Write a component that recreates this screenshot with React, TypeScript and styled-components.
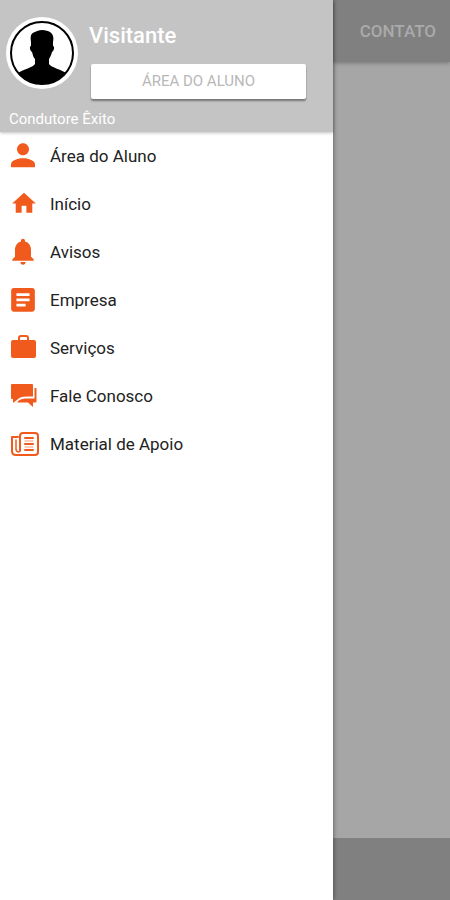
import React from "react";
import styled, { createGlobalStyle } from "styled-components";

const GlobalStyle = createGlobalStyle`
  *, *::before, *::after { box-sizing: border-box; }
  body { margin: 0; font-family: Roboto, "Liberation Sans", sans-serif; background: #a6a6a6; }
`;

const Screen = styled.div`
  display: flex;
  min-height: 100vh;
`;

const Drawer = styled.aside`
  flex: 0 0 74%;
  z-index: 1;
  background: #fff;
  box-shadow: 1px 0 4px rgba(0, 0, 0, 0.35);
`;

const Header = styled.header`
  display: flex;
  flex-direction: column;
  justify-content: space-between;
  height: 132px;
  padding: 15px 27px 3px 6px;
  background: #c4c4c4;
  box-shadow: 0 1px 3px rgba(0, 0, 0, 0.25);
  color: #fff;
`;

const Profile = styled.div`
  display: flex;
  gap: 11px;
`;

const Avatar = styled.svg`
  flex: none;
  width: 72px;
  height: 74px;
`;

const ProfileInfo = styled.div`
  flex: 1;
  display: flex;
  flex-direction: column;
  padding-top: 7px;
`;

const UserName = styled.h1`
  margin: 0;
  font-size: 22px;
  line-height: 28px;
  font-weight: 500;
`;

const AreaButton = styled.button`
  height: 35px;
  margin: 14px 0 0 2px;
  padding: 0;
  border: 0;
  border-radius: 2px;
  background: #fff;
  box-shadow: 0 2px 2px rgba(0, 0, 0, 0.4);
  color: #b8b8b8;
  font: 400 15px/35px Roboto, "Liberation Sans", sans-serif;
`;

const School = styled.p`
  margin: 0;
  padding-left: 3px;
  font-size: 15px;
  line-height: 20px;
`;

const Menu = styled.ul`
  margin: 0;
  padding: 0;
  list-style: none;
`;

const MenuLink = styled.a`
  display: flex;
  align-items: center;
  gap: 11px;
  height: 48px;
  padding-left: 11px;
  color: #222;
  font-size: 17px;
  line-height: 24px;
  text-decoration: none;
`;

const IconSlot = styled.span`
  display: flex;
  flex: none;
  width: 28px;
  color: #f15a1d;
`;

const Icon = styled.svg<{ $width: number; $height: number }>`
  width: ${(p) => p.$width}px;
  height: ${(p) => p.$height}px;
  fill: currentColor;
`;

const Page = styled.main`
  flex: 1;
  display: flex;
  flex-direction: column;
  min-width: 0;
  background: #a6a6a6;
`;

const TabBar = styled.nav`
  display: flex;
  align-items: center;
  justify-content: flex-end;
  height: 62px;
  padding-right: 14px;
  background: #808080;
  box-shadow: 0 1px 4px rgba(0, 0, 0, 0.3);
`;

const Tab = styled.a`
  color: #aaa;
  font-size: 17px;
  line-height: 24px;
  font-weight: 500;
  text-decoration: none;
`;

const BottomBar = styled.footer`
  height: 62px;
  margin-top: auto;
  background: #808080;
`;

type Item = { label: string; box: string; w: number; h: number; art: React.ReactNode };

const items: Item[] = [
  {
    label: "Área do Aluno", box: "4 4 16 17", w: 24, h: 26,
    art: <path d="M12 12c2.200 0 4-1.800 4-4s-1.800-4-4-4-4 1.800-4 4 1.800 4 4 4zm0 2c-2.700 0-8 1.300-8 4v2h16v-2c0-2.700-5.300-4-8-4z" />,
  },
  {
    label: "Início", box: "1 3 22 19", w: 26, h: 24,
    art: <path d="M10 20v-6h4v6h5v-8h3L12 3 2 12h3v8z" />,
  },
  {
    label: "Avisos", box: "3 2 18 21", w: 24, h: 28,
    art: <path d="M12 22c1.100 0 2-.9 2-2h-4c0 1.100.9 2 2 2zm6-6v-5c0-3.070-1.630-5.640-4.500-6.320V4c0-.83-.67-1.500-1.500-1.500s-1.500.67-1.500 1.500v.68C7.640 5.360 6 7.920 6 11v5l-2 2v1h16v-1l-2-2z" />,
  },
  {
    label: "Empresa", box: "3 3 18 19", w: 24, h: 25,
    art: <path d="M19 3H5c-1.100 0-2 .9-2 2v14c0 1.100.9 2 2 2h14c1.100 0 2-.9 2-2V5c0-1.100-.9-2-2-2zm-5 14H7v-2h7v2zm3-4H7v-2h10v2zm0-4H7V7h10v2z" />,
  },
  {
    label: "Serviços", box: "0 0 26 26", w: 26, h: 26,
    art: (
      <>
        <path d="M2 5h21a2 2 0 0 1 2 2v14a2 2 0 0 1-2 2H2a2 2 0 0 1-2-2V7a2 2 0 0 1 2-2z" />
        <path d="M8 6V3q0-2 2-2h5q2 0 2 2v3" fill="none" stroke="currentColor" strokeWidth="2" />
      </>
    ),
  },
  {
    label: "Fale Conosco", box: "0 0 26 24", w: 26, h: 24,
    art: (
      <>
        <path d="M1 0h20a1 1 0 0 1 1 1v11.500h-6c-5 0-8 1-10 3.500l-4 3v-4H1a1 1 0 0 1-1-1V1a1 1 0 0 1 1-1z" />
        <path d="M6 18.500c2-3 5-4 10-4h7.500V4h1a1 1 0 0 1 1 1v12.500a1 1 0 0 1-1 1H22V23l-5-4.500z" />
      </>
    ),
  },
  {
    label: "Material de Apoio", box: "0 0 28 24", w: 28, h: 24,
    art: (
      <g fill="none" stroke="currentColor" strokeLinecap="round" strokeLinejoin="round">
        <path strokeWidth="2" d="M9 19V4q0-3 3-3h12q3 0 3 3v16q0 3-3 3H5q-4 0-4-4V5h6" />
        <path strokeWidth="1.500" d="M5 8v9q0 3 3 3" />
        <path strokeWidth="2" d="M14 6h8M14 12h8M14 18h8" />
        <path strokeWidth="1" opacity="0.6" d="M14 9h8M14 15h8" />
      </g>
    ),
  },
];

export default function App() {
  return (
    <>
      <GlobalStyle />
      <Screen>
        <Drawer>
          <Header>
            <Profile>
              <Avatar viewBox="0 0 72 74" role="img" aria-label="Visitante">
                <defs>
                  <clipPath id="portrait"><circle cx="36" cy="38" r="31" /></clipPath>
                </defs>
                <circle cx="36" cy="38" r="36" fill="#fff" />
                <circle cx="36" cy="38" r="31" fill="#fff" stroke="#000" strokeWidth="2" />
                <path
                  clipPath="url(#portrait)"
                  d="M36 15c4 0 6 1 8 2 3 2 4 5 3 10v4c2 0 1 5-1 6-1 4-2 5-3 7v5c2 4 13 5 18 10v14H11V59c5-5 16-6 18-10v-5c-2-2-2-4-3-7-2-1-3-6-1-6v-4c-1-6 0-9 4-10 2-1 4-2 7-2z"
                />
              </Avatar>
              <ProfileInfo>
                <UserName>Visitante</UserName>
                <AreaButton type="button">ÁREA DO ALUNO</AreaButton>
              </ProfileInfo>
            </Profile>
            <School>Condutore Êxito</School>
          </Header>
          <nav aria-label="Menu">
            <Menu>
              {items.map((item) => (
                <li key={item.label}>
                  <MenuLink href="#">
                    <IconSlot>
                      <Icon viewBox={item.box} $width={item.w} $height={item.h} aria-hidden="true">
                        {item.art}
                      </Icon>
                    </IconSlot>
                    {item.label}
                  </MenuLink>
                </li>
              ))}
            </Menu>
          </nav>
        </Drawer>
        <Page>
          <TabBar>
            <Tab href="#">CONTATO</Tab>
          </TabBar>
          <BottomBar />
        </Page>
      </Screen>
    </>
  );
}
